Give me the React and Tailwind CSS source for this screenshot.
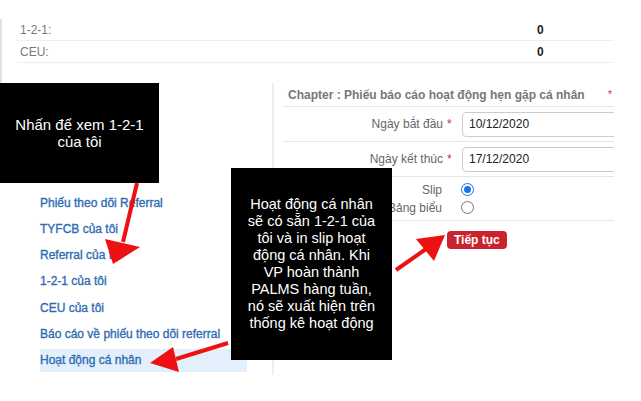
import React from "react";

const menu = [
  "Phiếu theo dõi Referral",
  "TYFCB của tôi",
  "Referral của tôi",
  "1-2-1 của tôi",
  "CEU của tôi",
  "Báo cáo về phiếu theo dõi referral",
  "Hoạt động cá nhân",
];

function StatRow({ label, value }) {
  return (
    <div className="flex items-center h-[22px] border-b border-[#eeeeee] text-[12px]">
      <span className="pl-[3px] w-[520px] text-[#777]">{label}</span>
      <span className="font-bold text-[#222]">{value}</span>
    </div>
  );
}

function DateRow({ label, value }) {
  return (
    <div className="flex items-center h-[35px] border-b border-[#e6e6e6]">
      <span className="w-[160px] shrink-0 text-right text-[12px] text-[#666]">{label}</span>
      <span className="ml-[4px] w-[15px] shrink-0 text-[12px] text-[#e02020]">*</span>
      <div className="h-[25px] w-[200px] shrink-0 rounded-[4px] border border-[#cccccc] pl-[6px] flex items-center text-[12px] text-[#222]">
        {value}
      </div>
    </div>
  );
}

export default function App() {
  return (
    <div className="relative w-[641px] h-[401px] bg-white overflow-hidden font-['Liberation_Sans',Arial,sans-serif]">
      <div className="w-[614px] overflow-hidden">
        {/* stats */}
        <div className="mt-[19px] border-l-2 border-[#e3e3e3] pl-[15px] h-[64px]">
          <StatRow label="1-2-1:" value="0" />
          <StatRow label="CEU:" value="0" />
        </div>

        <div className="flex">
          {/* left menu */}
          <div className="w-[272px] shrink-0 pl-[40px] pt-[108px]">
            <div className="flex flex-col gap-[3.3px]">
              {menu.map((m, i) => (
                <div
                  key={m}
                  className={`h-[23px] w-[207px] flex items-center text-[12px] text-[#2f6cb4] [-webkit-text-stroke:0.35px_#2f6cb4] ${
                    i === menu.length - 1 ? "bg-[#e3f0fc]" : ""
                  }`}
                >
                  {m}
                </div>
              ))}
            </div>
          </div>

          {/* right panel */}
          <div className="w-[342px] h-[292px] border-l-2 border-[#eeeeee] pl-[9px] overflow-hidden">
            <div className="h-[24px] border-b border-[#e6e6e6] flex items-center justify-between pl-[5px] text-[12px] font-bold text-[#777]">
              <span>Chapter : Phiếu báo cáo hoạt động hẹn gặp cá nhân</span>
              <span className="text-[#e02020] font-normal text-[10px] mr-[2px]">*</span>
            </div>
            <DateRow label="Ngày bắt đầu" value="10/12/2020" />
            <DateRow label="Ngày kết thúc" value="17/12/2020" />
            <div className="h-[44px] border-b border-[#e6e6e6] flex flex-col justify-center gap-[5px] text-[12px] text-[#666]">
              <div className="flex items-center h-[13px]">
                <span className="w-[159px] shrink-0 text-right">Slip</span>
                <span className="ml-[19px] w-[13px] h-[13px] rounded-full border border-[#1a73e8] flex items-center justify-center">
                  <span className="w-[7px] h-[7px] rounded-full bg-[#1a73e8]" />
                </span>
              </div>
              <div className="flex items-center h-[13px]">
                <span className="w-[159px] shrink-0 text-right">Bảng biểu</span>
                <span className="ml-[19px] w-[13px] h-[13px] rounded-full border border-[#777]" />
              </div>
            </div>
            <div className="pl-[164px] pt-[6px]">
              <button className="h-[18px] px-[7px] rounded-[4px] bg-[#c8232f] text-white text-[12px] font-bold leading-[18px]">
                Tiếp tục
              </button>
            </div>
          </div>
        </div>
      </div>

      {/* callouts */}
      <div className="absolute left-0 top-[83px] w-[159px] h-[100px] bg-black text-white text-[15px] leading-[17px] text-center flex items-center justify-center">
        <p>
          Nhấn để xem 1-2-1
          <br />
          của tôi
        </p>
      </div>
      <div className="absolute left-[231px] top-[168px] w-[161px] h-[192px] bg-black text-white text-[14.5px] leading-[16.9px] text-center flex items-center justify-center">
        <p>
          Hoạt động cá nhân
          <br />
          sẽ có sẵn 1-2-1 của
          <br />
          tôi và in slip hoạt
          <br />
          động cá nhân. Khi
          <br />
          VP hoàn thành
          <br />
          PALMS hàng tuần,
          <br />
          nó sẽ xuất hiện trên
          <br />
          thống kê hoạt động
        </p>
      </div>

      {/* arrows */}
      <svg className="absolute inset-0 pointer-events-none" width="641" height="401" viewBox="0 0 641 401">
        <g fill="#ee1111" stroke="#ee1111" strokeWidth="4" strokeLinecap="butt">
          <line x1="137" y1="183" x2="123" y2="242" />
          <polygon points="105,239 140,247 113,264" stroke="none" />
          <line x1="228" y1="343" x2="176" y2="359" />
          <polygon points="173,347 179,372 150,363" stroke="none" />
          <line x1="396" y1="270" x2="426" y2="249" />
          <polygon points="416,239 434,261 445,235" stroke="none" />
        </g>
      </svg>
    </div>
  );
}
